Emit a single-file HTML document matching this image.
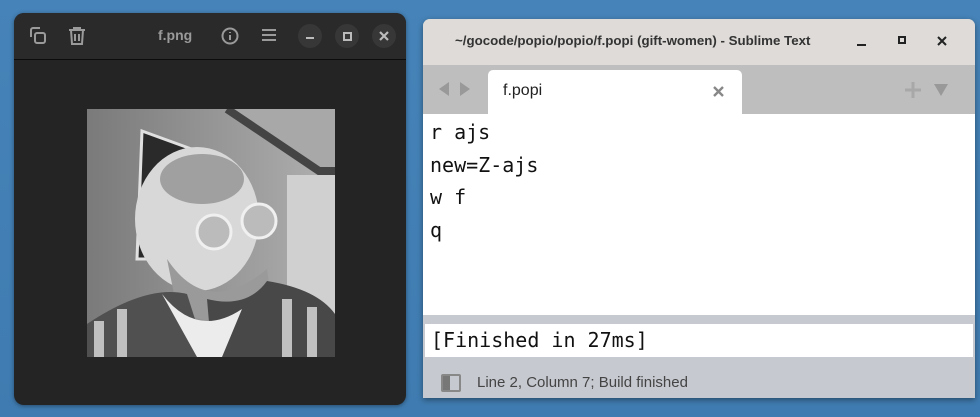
<!DOCTYPE html>
<html><head><style>
body{margin:0;width:980px;height:417px;overflow:hidden;background:linear-gradient(180deg,#4683b8,#3f7bb0);font-family:"Liberation Sans","DejaVu Sans",sans-serif;position:relative}
.lw{position:absolute;left:14px;top:13px;width:392px;height:392px;background:#242424;border-radius:10px;overflow:hidden;box-shadow:0 1px 4px rgba(0,0,0,.4)}
.lh{position:absolute;left:0;top:0;width:392px;height:46px;background:#2a2a2a;border-bottom:1px solid #0c0c0c}
.t{position:absolute;color:#9a9a9a;font-weight:bold;font-size:14px}
.cb{position:absolute;top:11px;width:24px;height:24px;border-radius:50%;background:#373737}
.rw{position:absolute;left:423px;top:19px;width:552px;height:379px;background:#c6c9d0;border-radius:7px 7px 0 0;overflow:hidden;box-shadow:0 2px 6px rgba(0,0,0,.4)}
.tb{position:absolute;left:0;top:0;width:552px;height:46px;background:#dedbd8;border-bottom:1px solid #cfccc9}
.tabs{position:absolute;left:0;top:46px;width:552px;height:49px;background:#bebebe}
.tab{position:absolute;left:65px;top:5px;width:254px;height:44px;background:#fff;border-radius:5px 5px 0 0}
.ed{position:absolute;left:0;top:95px;width:552px;height:201px;background:#fff}
.code{position:absolute;left:7px;font-family:"DejaVu Sans Mono","Liberation Mono",monospace;font-size:20px;color:#111}
.out{position:absolute;left:2px;top:305px;width:548px;height:33px;background:#fff}
</style></head><body>
<div class="lw">
 <div class="lh">
  <svg style="position:absolute;left:14px;top:13px" width="20" height="20" viewBox="0 0 20 20" fill="none" stroke="#9a9a9a" stroke-width="2"><path d="M3 11V4a2 2 0 0 1 2-2h7"/><rect x="7" y="7" width="10" height="10" rx="2"/></svg>
  <svg style="position:absolute;left:54px;top:13px" width="18" height="20" viewBox="0 0 18 20" fill="none" stroke="#9a9a9a" stroke-width="2"><path d="M1 4h16M6 4V2h6v2M3 4l1 14h10l1-14M7 8v7M11 8v7"/></svg>
  <div class="t" style="left:144px;top:14px">f.png</div>
  <svg style="position:absolute;left:207px;top:14px" width="18" height="18" viewBox="0 0 18 18" fill="none" stroke="#9a9a9a" stroke-width="2"><circle cx="9" cy="9" r="7.5"/><path d="M9 8v5M9 5v1"/></svg>
  <svg style="position:absolute;left:248px;top:15px" width="14" height="14" viewBox="0 0 14 14" stroke="#9a9a9a" stroke-width="2"><path d="M0 2h14M0 7h14M0 12h14"/></svg>
  <div class="cb" style="left:284px"><div style="position:absolute;left:8px;top:13px;width:8px;height:2px;background:#bbb"></div></div>
  <div class="cb" style="left:321px"><div style="position:absolute;left:8px;top:8px;width:5px;height:5px;border:2px solid #bbb"></div></div>
  <div class="cb" style="left:358px"><svg style="position:absolute;left:7px;top:7px" width="10" height="10" stroke="#bbb" stroke-width="2.2"><path d="M1 1L9 9M9 1L1 9"/></svg></div>
 </div>
 <svg style="position:absolute;left:73px;top:96px" width="248" height="248" viewBox="0 0 248 248">
  <defs><linearGradient id="g" x1="0" y1="0" x2="1" y2="0"><stop offset="0" stop-color="#7a7a7a"/><stop offset="1" stop-color="#b0b0b0"/></linearGradient></defs>
  <rect width="248" height="248" fill="url(#g)"/>
  <path d="M145 0L235 62L248 62V0z" fill="#a8a8a8"/>
  <path d="M140 0L232 62L248 62" stroke="#444" stroke-width="8" fill="none"/>
  <rect x="200" y="66" width="48" height="150" fill="#d0d0d0"/>
  <path d="M55 22L110 42V150H50z" fill="#2a2a2a" stroke="#e0e0e0" stroke-width="3"/>
  <ellipse cx="110" cy="110" rx="62" ry="72" fill="#d8d8d8"/>
  <ellipse cx="115" cy="70" rx="42" ry="25" fill="#a0a0a0"/>
  <circle cx="127" cy="123" r="17" fill="#bbb" stroke="#f0f0f0" stroke-width="3"/>
  <circle cx="172" cy="112" r="17" fill="#bbb" stroke="#f0f0f0" stroke-width="3"/>
  <path d="M80 150Q120 210 180 160L185 200Q130 225 90 200z" fill="#9a9a9a"/>
  <path d="M0 215Q60 175 100 185L120 248H0z" fill="#505050"/>
  <path d="M120 190Q160 200 180 172Q230 180 248 205V248H125z" fill="#484848"/>
  <path d="M75 185Q110 230 155 200L135 248H110z" fill="#ececec"/>
  <path d="M12 248V212M35 248V200M200 248V190M225 248V198" stroke="#c0c0c0" stroke-width="10"/>
 </svg>
</div>
<div class="rw">
 <div class="tb">
  <div style="position:absolute;left:32px;top:14px;font-size:13.3px;font-weight:bold;color:#333">~/gocode/popio/popio/f.popi (gift-women) - Sublime Text</div>
  <div style="position:absolute;left:434px;top:25px;width:9px;height:2px;background:#222"></div>
  <div style="position:absolute;left:475px;top:17px;width:4px;height:4px;border:2px solid #222"></div>
  <svg style="position:absolute;left:514px;top:17px" width="10" height="10" stroke="#222" stroke-width="2"><path d="M1 1L9 9M9 1L1 9"/></svg>
 </div>
 <div class="tabs">
  <div style="position:absolute;left:16px;top:17px;width:0;height:0;border:7px solid transparent;border-right:10px solid #999;border-left:0"></div>
  <div style="position:absolute;left:37px;top:17px;width:0;height:0;border:7px solid transparent;border-left:10px solid #999;border-right:0"></div>
  <div class="tab">
   <div style="position:absolute;left:15px;top:12px;font-size:16px;color:#222">f.popi</div>
   <svg style="position:absolute;left:225px;top:16px" width="11" height="11" stroke="#888" stroke-width="2.4"><path d="M1 1L10 10M10 1L1 10"/></svg>
  </div>
  <svg style="position:absolute;left:482px;top:17px" width="16" height="16" stroke="#a8a8a8" stroke-width="3"><path d="M8 0V16M0 8H16"/></svg>
  <div style="position:absolute;left:511px;top:19px;width:0;height:0;border:7px solid transparent;border-top:12px solid #999;border-bottom:0"></div>
 </div>
 <div class="ed">
  <div class="code" style="top:6px">r ajs</div>
  <div class="code" style="top:39px">new=Z-ajs</div>
  <div class="code" style="top:71px">w f</div>
  <div class="code" style="top:104px">q</div>
 </div>
 <div class="out"><div class="code" style="left:6px;top:4px">[Finished in 27ms]</div></div>
 <div style="position:absolute;left:18px;top:355px;width:16px;height:14px;border:2px solid #888;border-radius:2px;background:linear-gradient(90deg,#777 45%,#c6c9d0 45%)"></div>
 <div style="position:absolute;left:54px;top:355px;font-size:15px;color:#444">Line 2, Column 7; Build finished</div>
</div>
</body></html>
